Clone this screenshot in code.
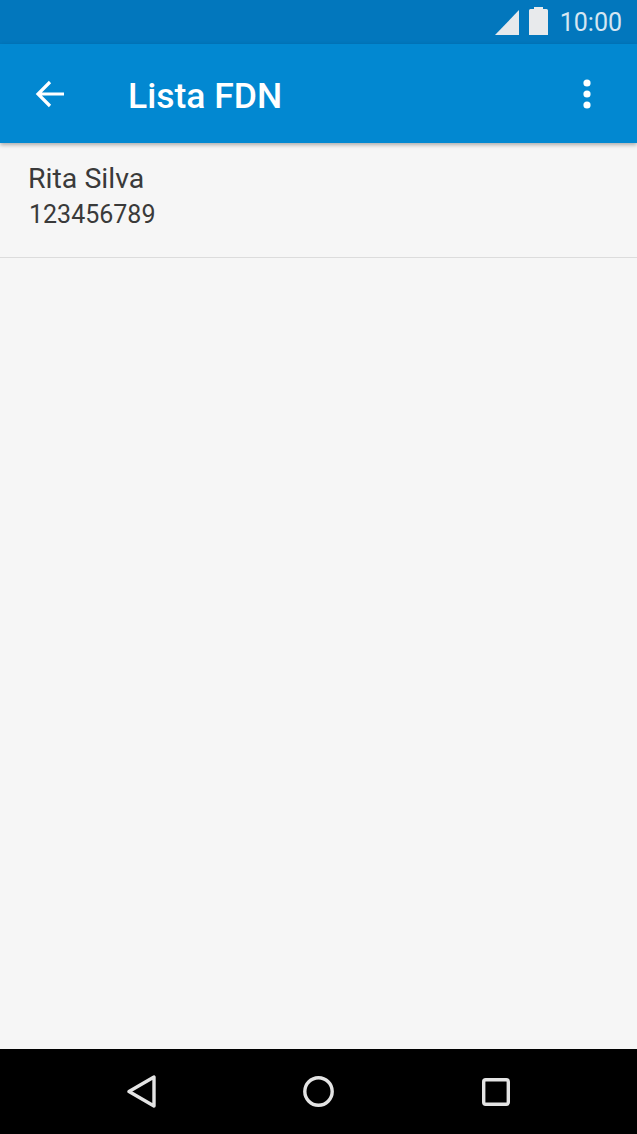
<div class="screen">
  <div class="status">
    <svg class="signal" width="24" height="25" viewBox="0 0 24 25"><path d="M24 0V25H0Z" fill="#e6e9ec"/></svg>
    <svg class="battery" width="19" height="28" viewBox="0 0 19 28"><path d="M5 0H14V2H17.5Q19 2 19 3.5V28H0V3.5Q0 2 1.5 2H5Z" fill="#e8eaec"/></svg>
    <span class="time">10:00</span>
  </div>
  <header class="bar">
    <svg class="back" width="30" height="30" viewBox="0 0 30 30"><path d="M29 15H3M15 3 3 15 15 27" fill="none" stroke="#fff" stroke-width="3.2"/></svg>
    <h1>Lista FDN</h1>
    <svg class="more" width="8" height="30" viewBox="0 0 8 30"><circle cx="4" cy="4" r="3.6" fill="#fff"/><circle cx="4" cy="15" r="3.6" fill="#fff"/><circle cx="4" cy="26" r="3.6" fill="#fff"/></svg>
  </header>
  <main class="content">
    <div class="row">
      <div class="name">Rita Silva</div>
      <div class="number">123456789</div>
    </div>
  </main>
  <nav class="nav">
    <svg width="29" height="33" viewBox="0 0 29 33"><path d="M27 2V31L2 16.5Z" fill="none" stroke="#e4e4e4" stroke-width="3.4" stroke-linejoin="round"/></svg>
    <svg class="home" width="31" height="31" viewBox="0 0 31 31"><circle cx="15.5" cy="15.5" r="13.7" fill="none" stroke="#e4e4e4" stroke-width="3.4"/></svg>
    <svg width="28" height="28" viewBox="0 0 28 28"><rect x="1.7" y="1.7" width="24.6" height="24.6" rx="2" fill="none" stroke="#e4e4e4" stroke-width="3.4"/></svg>
  </nav>
</div>

<style>
  :global(body) { margin: 0; }
  .screen {
    width: 637px;
    height: 1134px;
    display: flex;
    flex-direction: column;
    background: #f6f6f6;
    font-family: Roboto, "Liberation Sans", sans-serif;
    overflow: hidden;
  }
  .status {
    height: 44px;
    flex: none;
    background: #0277bd;
    display: flex;
    align-items: center;
    justify-content: flex-end;
    padding-right: 15px;
    box-sizing: border-box;
  }
  .signal { margin-right: 10px; margin-top: 1px; }
  .battery { margin-right: 12px; margin-top: -2px; }
  .time { color: #d5e6f2; font-size: 25px; }
  .bar {
    height: 99px;
    flex: none;
    background: #0288d1;
    display: flex;
    align-items: center;
    box-shadow: 0 2px 4px rgba(0,0,0,.3);
    position: relative;
    box-sizing: border-box;
    padding: 0 46px 0 35px;
  }
  h1 {
    flex: 1;
    margin: 5px 0 0 63px;
    color: #fff;
    font-size: 35.5px;
    font-weight: 500;
  }
  .content { flex: 1; }
  .row {
    height: 115px;
    box-sizing: border-box;
    border-bottom: 1px solid #dcdcdc;
    padding: 19px 28px 0;
    color: #3a3a3a;
  }
  .name { font-size: 28.5px; line-height: 34px; }
  .number { font-size: 25px; line-height: 38px; margin-left: 1px; }
  .nav {
    height: 85px;
    flex: none;
    background: #000;
    display: flex;
    align-items: center;
    padding-left: 127px;
  }
  .home { margin: 0 148px 0 147px; }
</style>
